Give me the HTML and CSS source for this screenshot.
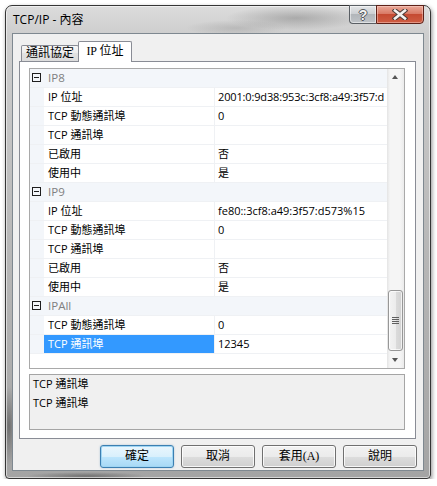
FILE: index.html
```html
<!DOCTYPE html>
<html lang="zh-Hant">

<head>
    <meta charset="UTF-8">
    <meta name="viewport" content="width=device-width, initial-scale=1.0">
    <title>TCP/IP - 內容</title>
    <link rel="stylesheet" href="styles.css">
</head>

<body>
    <div class="window">
        <div class="titlebar">
            <span class="title">TCP/IP - 內容</span>
            <div class="caps">
                <div class="cap help">?</div>
                <div class="cap close">
                    <svg width="16" height="11" viewBox="0 0 16 11">
                        <path d="M3 1.5 L13 9.5 M13 1.5 L3 9.5" stroke="#4a3a36" stroke-width="4.6" stroke-linecap="square" fill="none"/>
                        <path d="M3 1.5 L13 9.5 M13 1.5 L3 9.5" stroke="#f4f1f0" stroke-width="2.6" stroke-linecap="square" fill="none"/>
                    </svg>
                </div>
            </div>
        </div>

        <div class="client">
            <div class="tabs">
                <div class="tab">通訊協定</div>
                <div class="tab active">IP 位址</div>
            </div>

            <div class="panel">
                <div class="grid">
                    <div class="rows">
                        <div class="cat"><span class="toggle"></span>IP8</div>
                        <div class="row"><div class="name">IP 位址</div><div class="val tight">2001:0:9d38:953c:3cf8:a49:3f57:d</div></div>
                        <div class="row"><div class="name">TCP 動態通訊埠</div><div class="val">0</div></div>
                        <div class="row"><div class="name">TCP 通訊埠</div><div class="val"></div></div>
                        <div class="row"><div class="name">已啟用</div><div class="val">否</div></div>
                        <div class="row"><div class="name">使用中</div><div class="val">是</div></div>

                        <div class="cat"><span class="toggle"></span>IP9</div>
                        <div class="row"><div class="name">IP 位址</div><div class="val">fe80::3cf8:a49:3f57:d573%15</div></div>
                        <div class="row"><div class="name">TCP 動態通訊埠</div><div class="val">0</div></div>
                        <div class="row"><div class="name">TCP 通訊埠</div><div class="val"></div></div>
                        <div class="row"><div class="name">已啟用</div><div class="val">否</div></div>
                        <div class="row"><div class="name">使用中</div><div class="val">是</div></div>

                        <div class="cat"><span class="toggle"></span>IPAll</div>
                        <div class="row"><div class="name">TCP 動態通訊埠</div><div class="val">0</div></div>
                        <div class="row selected"><div class="name">TCP 通訊埠</div><div class="val">12345</div></div>
                    </div>

                    <div class="scrollbar">
                        <div class="arrow up"></div>
                        <div class="track"></div>
                        <div class="thumb"><span class="grip"></span></div>
                        <div class="arrow down"></div>
                    </div>
                </div>

                <div class="desc">
                    <p>TCP 通訊埠</p>
                    <p class="desc-text">TCP 通訊埠</p>
                </div>
            </div>

            <div class="buttons">
                <div class="btn default">確定</div>
                <div class="btn">取消</div>
                <div class="btn">套用(A)</div>
                <div class="btn">說明</div>
            </div>
        </div>
    </div>
</body>

</html>
```

FILE: styles.css
```css
body {
    margin: 0;
    background: #fff;
    font-family: "Open Sans", "Noto Sans CJK TC", sans-serif;
    font-size: 11px;
    color: #000;
}

/* window frame (aero glass, approximated) */
.window {
    box-sizing: border-box;
    width: 426px;
    height: 474px;
    margin: 5px 0 0 5px;
    padding: 0 6px 7px 6px;
    border: 1px solid #353535;
    border-radius: 7px 7px 4px 4px;
    display: flex;
    flex-direction: column;
    background:
        radial-gradient(ellipse 70px 12px at 290px 12px, rgba(70, 70, 70, .3), transparent),
        radial-gradient(ellipse 50px 8px at 230px 22px, rgba(90, 90, 90, .2), transparent),
        radial-gradient(ellipse 8px 40px at 3px 420px, rgba(40, 40, 40, .45), transparent),
        radial-gradient(ellipse 60px 4px at 80px 470px, rgba(40, 40, 40, .4), transparent),
        linear-gradient(to bottom, #dcdcdc, #cdcdcd 30px, #b8b8b8 50%, #a4a4a4);
    box-shadow: 1px 2px 4px rgba(0, 0, 0, .45), inset 0 0 0 1px rgba(255, 255, 255, .55);
}

.titlebar {
    height: 27px;
    flex-shrink: 0;
    display: flex;
    justify-content: space-between;
    align-items: flex-start;
}

.title {
    font-size: 12px;
    line-height: 16px;
    margin: 6px 0 0 1px;
}

.caps {
    display: flex;
    margin-top: -1px;
}

.cap {
    box-sizing: border-box;
    height: 19px;
    display: flex;
    align-items: center;
    justify-content: center;
}

.cap.help {
    width: 27px;
    border: 1px solid #5a5f64;
    border-right: none;
    border-radius: 0 0 0 4px;
    background: linear-gradient(#e4e6e8, #cdd0d3 45%, #b2b6ba 50%, #bfc3c7);
    box-shadow: inset 0 0 0 1px rgba(255, 255, 255, .5);
    font-family: "Liberation Sans", sans-serif;
    font-weight: bold;
    font-size: 14px;
    color: #f2f2f2;
    text-shadow: 1px 0 #55585c, -1px 0 #55585c, 0 1px #55585c, 0 -1px #55585c;
}

.cap.close {
    width: 48px;
    border: 1px solid #5d2017;
    border-radius: 0 0 4px 0;
    background: linear-gradient(#eaa898, #d97a66 45%, #c54a32 50%, #cf5d43);
    box-shadow: inset 0 0 0 1px rgba(255, 220, 210, .45);
}

.client {
    flex: 1;
    box-sizing: border-box;
    border: 1px solid #7e8890;
    background: #f0f0f0;
    display: flex;
    flex-direction: column;
}

/* tabs */
.tabs {
    display: flex;
    align-items: flex-end;
    height: 20px;
    margin: 7px 0 0 8px;
    position: relative;
    z-index: 1;
}

.tab {
    box-sizing: border-box;
    width: 58px;
    height: 16px;
    border: 1px solid #898c95;
    border-bottom: none;
    border-radius: 2px 2px 0 0;
    background: linear-gradient(#f6f6f6, #ececec 50%, #e2e2e2 50%, #dcdcdc);
    font-family: "Liberation Serif", "Noto Sans CJK TC", serif;
    font-size: 12px;
    line-height: 15px;
    text-align: center;
}

.tab.active {
    width: 54px;
    height: 21px;
    margin: 0 0 -1px -1px;
    background: #fff;
    line-height: 19px;
}

.panel {
    box-sizing: border-box;
    width: 397px;
    height: 378px;
    margin-left: 6px;
    padding: 6px 10px 8px 9px;
    border: 1px solid #898c95;
    background: #fff;
}

/* property grid */
.grid {
    box-sizing: border-box;
    height: 301px;
    border: 1px solid #a9a9a9;
    display: flex;
}

.rows {
    flex: 1;
    min-width: 0;
}

.row,
.cat {
    box-sizing: border-box;
    height: 19px;
    line-height: 18px;
    border-bottom: 1px solid #eff1f4;
    display: flex;
}

.cat {
    background: #f3f6fa;
    color: #808080;
    font-size: 11.5px;
    align-items: center;
}

.toggle {
    box-sizing: border-box;
    position: relative;
    width: 9px;
    height: 9px;
    margin: -1px 7px 0 2px;
    border: 1px solid #1e1e1e;
}

.toggle::after {
    content: "";
    position: absolute;
    left: 1px;
    top: 3px;
    width: 5px;
    height: 1px;
    background: #1e1e1e;
}

.row {
    padding-left: 14px;
    background: linear-gradient(to right, #f3f6fa 14px, #fff 14px);
}

.name {
    box-sizing: border-box;
    width: 171px;
    padding-left: 4px;
    border-right: 1px solid #eff1f4;
    white-space: nowrap;
}

.val {
    flex: 1;
    min-width: 0;
    padding-left: 3px;
    white-space: nowrap;
    overflow: hidden;
}

.val.tight {
    letter-spacing: -0.15px;
}

.row.selected .name {
    background: #3399ff;
    color: #fff;
}

.scrollbar {
    width: 17px;
    display: flex;
    flex-direction: column;
    background: linear-gradient(to right, #e4e4e4, #f5f5f5 3px, #f5f5f5 13px, #ebebeb);
}

.arrow {
    height: 17px;
    position: relative;
}

.arrow::after {
    content: "";
    position: absolute;
    left: 5px;
    top: 6px;
    border-left: 3.5px solid transparent;
    border-right: 3.5px solid transparent;
}

.arrow.up::after {
    border-bottom: 4px solid #555;
}

.arrow.down::after {
    top: 7px;
    border-top: 4px solid #555;
}

.track {
    flex: 1;
}

.thumb {
    box-sizing: border-box;
    height: 61px;
    margin: 0 1px;
    border: 1px solid #979797;
    border-radius: 3px;
    background: linear-gradient(to right, #f3f3f3, #ececec 50%, #dcdcdc 50%, #d2d2d2);
    box-shadow: inset 0 0 0 1px rgba(255, 255, 255, .7);
    display: flex;
    align-items: center;
    justify-content: center;
}

.grip {
    width: 7px;
    height: 7px;
    background: repeating-linear-gradient(#5f5f5f 0 1px, transparent 1px 2px);
}

/* description */
.desc {
    box-sizing: border-box;
    height: 56px;
    margin-top: 5px;
    padding-left: 3px;
    border: 1px solid #a5a5a5;
    background: #f0f0f0;
}

.desc p {
    margin: 0;
    line-height: 17px;
}

.desc-text {
    padding-top: 2px;
}

/* dialog buttons */
.buttons {
    display: flex;
    justify-content: flex-end;
    gap: 7px;
    margin: 6px 6px 0 0;
}

.btn {
    box-sizing: border-box;
    width: 74px;
    height: 23px;
    border: 1px solid #707070;
    border-radius: 3px;
    background: linear-gradient(#f2f2f2, #ebebeb 50%, #dddddd 50%, #cfcfcf);
    box-shadow: inset 0 0 0 1px rgba(255, 255, 255, .8);
    font-family: "Liberation Serif", "Noto Sans CJK TC", serif;
    font-size: 12px;
    line-height: 21px;
    text-align: center;
}

.btn.default {
    border-color: #3c7fb1;
    background: linear-gradient(#eaf6fd, #d9f0fc 50%, #bee6fd 50%, #a7d9f5);
    box-shadow: inset 0 0 0 1px #9fd5f3, 0 0 2px rgba(60, 127, 177, .4);
}
```
